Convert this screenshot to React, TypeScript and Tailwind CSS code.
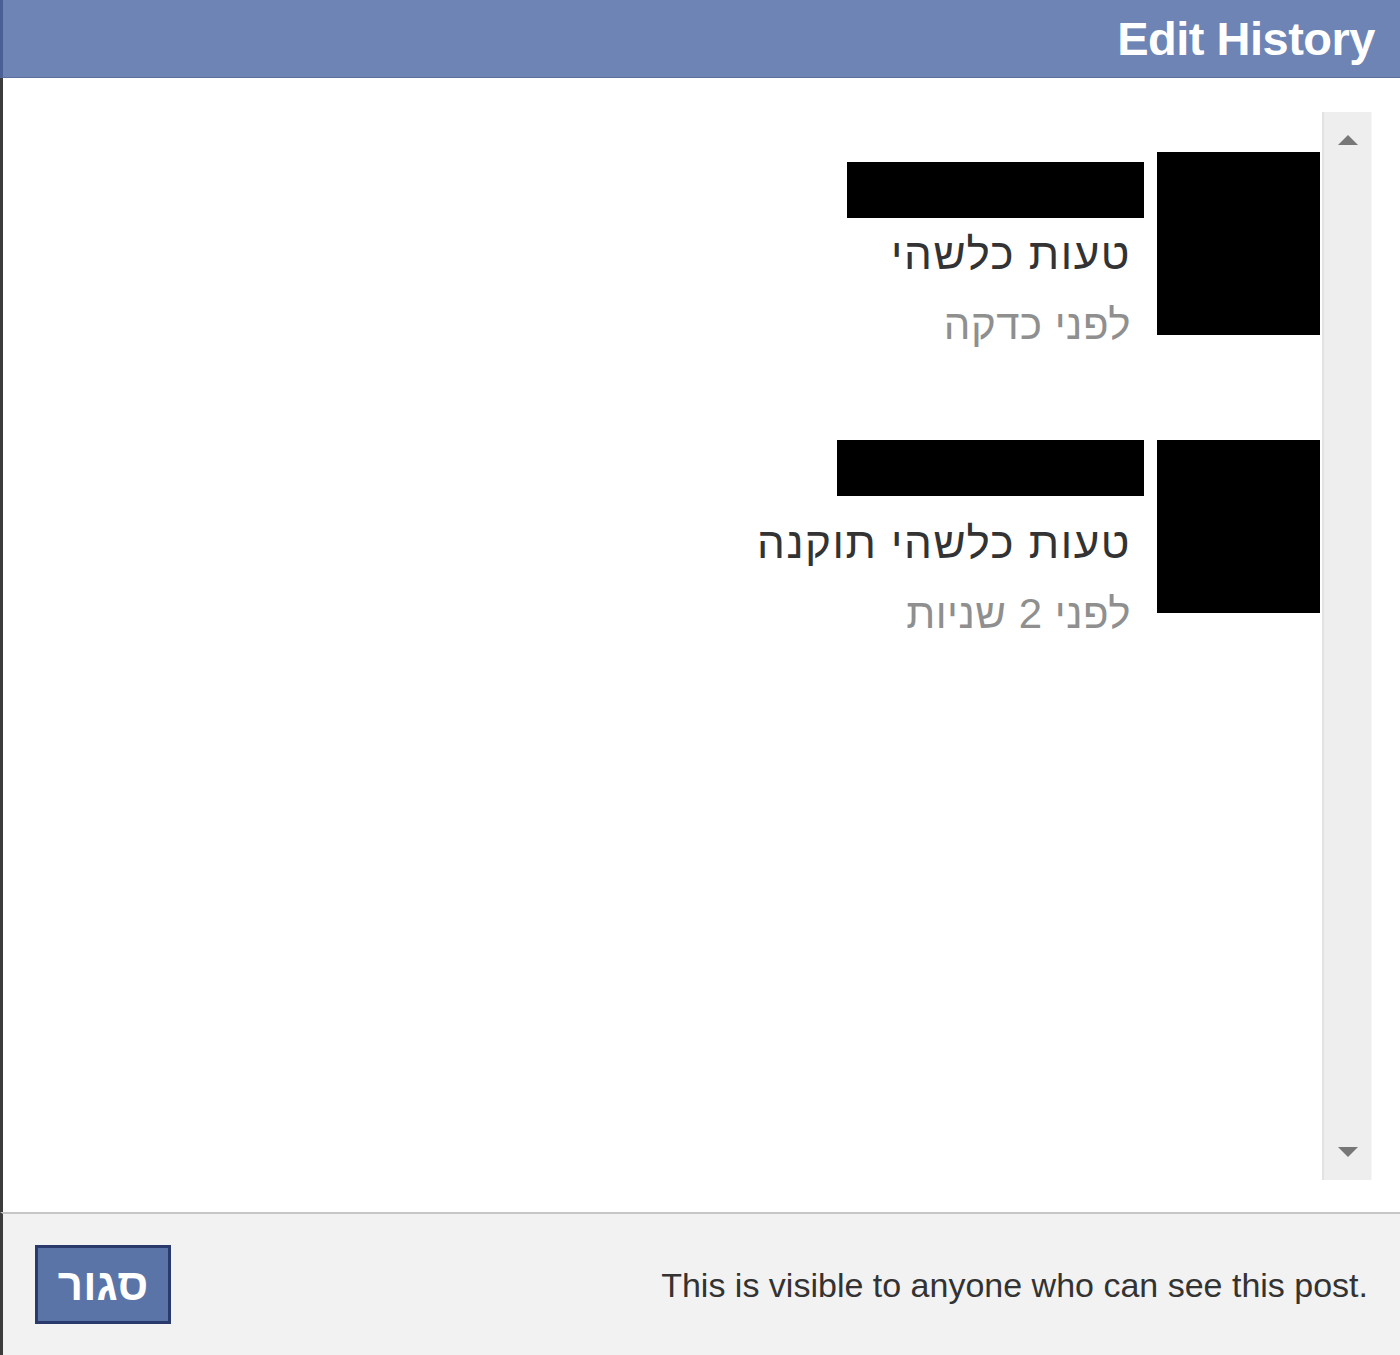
const entries = [
  { avatarH: 183, barW: 297, barMt: 10, msgMt: 0, text: "טעות כלשהי", time: "לפני כדקה" },
  { avatarH: 173, barW: 307, barMt: 0, msgMt: 11, text: "טעות כלשהי תוקנה", time: "לפני 2 שניות" },
];

function Entry({ e }: { e: (typeof entries)[number] }) {
  return (
    <div className="flex items-start gap-[13px]">
      <div className="w-[163px] shrink-0 bg-black" style={{ height: e.avatarH }} />
      <div className="flex flex-col items-start">
        <div className="h-[56px] bg-black" style={{ width: e.barW, marginTop: e.barMt }} />
        <div
          className="ps-[13px] text-[44px] tracking-[1.5px] leading-[72px] text-[#333333]"
          style={{ marginTop: e.msgMt }}
        >
          {e.text}
        </div>
        <div className="ps-[13px] text-[42px] tracking-[0.5px] leading-[70px] text-[#8f8f8f]">{e.time}</div>
      </div>
    </div>
  );
}

export default function App() {
  return (
    <div
      className="w-[1400px] h-[1355px] flex flex-col bg-white overflow-hidden"
      style={{ fontFamily: '"Liberation Sans", Arial, sans-serif' }}
    >
      {/* header */}
      <div className="h-[78px] shrink-0 flex items-center justify-end bg-[#6d84b4] border-l-[3px] border-[#4a5f95] border-b border-b-[#5b6f9c] pr-[25px]">
        <h1 className="text-[47px] font-bold text-white leading-none tracking-[-0.5px]">Edit History</h1>
      </div>

      {/* body */}
      <div className="flex-1 flex border-l-[3px] border-[#3c3c3c] pt-[34px] pr-[28px] pb-[32px]">
        <div dir="rtl" className="flex-1 flex flex-col items-start pt-[40px] gap-[80px] pr-[2px]">
          {entries.map((e, i) => (
            <Entry key={i} e={e} />
          ))}
        </div>
        {/* scrollbar */}
        <div className="w-[50px] shrink-0 flex flex-col items-center justify-between bg-[#eeeeee] border-l-2 border-[#e2e2e2] border-r border-r-[#f6f6f6] py-[22px]">
          <svg width="22" height="12" viewBox="0 0 22 12">
            <path d="M11 1 L21 11 L1 11 Z" fill="#777" />
          </svg>
          <svg width="22" height="12" viewBox="0 0 22 12">
            <path d="M1 1 L21 1 L11 11 Z" fill="#777" />
          </svg>
        </div>
      </div>

      {/* footer */}
      <div className="h-[143px] shrink-0 flex items-center justify-between bg-[#f2f2f2] border-t-2 border-[#c6c6c6] border-l-[3px] border-l-[#3c3c3c] pl-[32px] pr-[32px]">
        <button className="w-[136px] h-[79px] flex items-center justify-center bg-[#5b74a8] border-[3px] border-[#2a3a6c] text-white font-bold text-[44px] leading-none">
          סגור
        </button>
        <p className="text-[34px] text-[#333333] leading-none">
          This is visible to anyone who can see this post.
        </p>
      </div>
    </div>
  );
}
